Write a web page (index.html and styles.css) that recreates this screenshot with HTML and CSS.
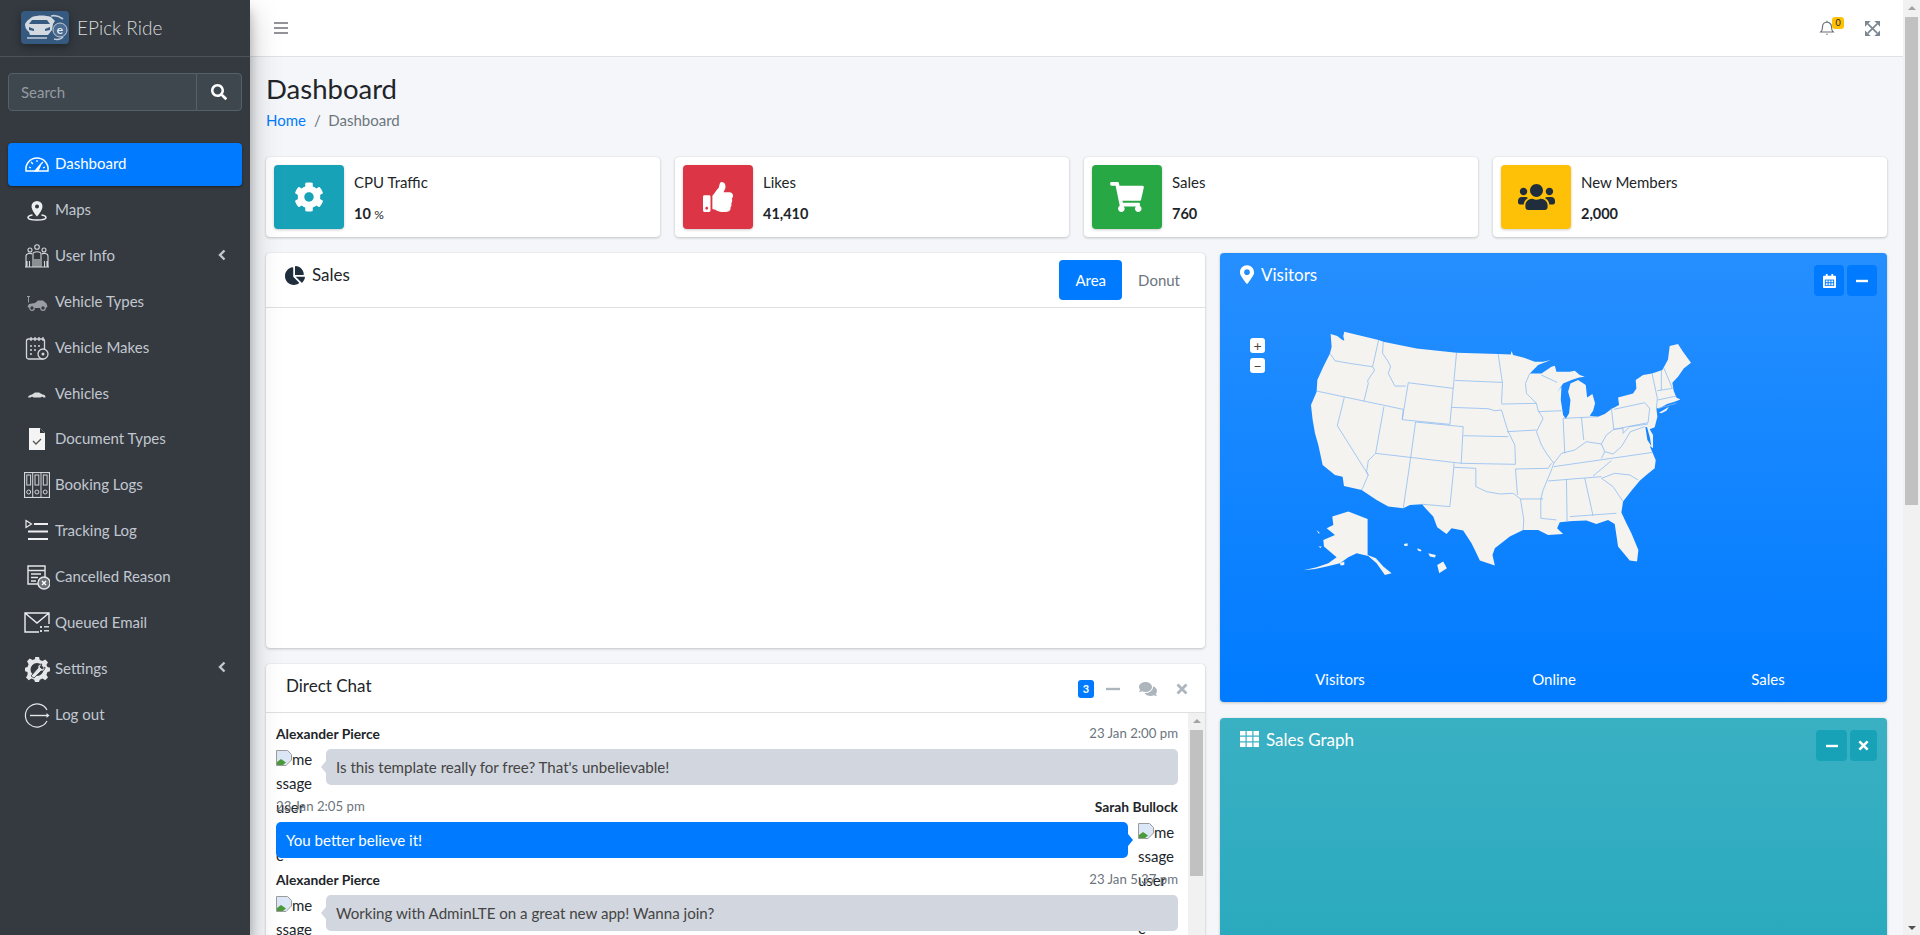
FILE: index.html
```html
<!DOCTYPE html>
<html lang="en">
<head>
<meta charset="utf-8">
<title>EPick Ride | Dashboard</title>
<link rel="stylesheet" href="styles.css">
</head>
<body>
<aside class="sidebar">
  <div class="brand">
    <svg class="logo" viewBox="0 0 48 33"><rect width="48" height="33" rx="4" fill="#35597f"/><path d="M4 13l2-3 5-4c6-2 13-2 19 0l4 4-2 3-1 6-4 5H9l-1-3c-3-2-4-5-4-8z" fill="#d3d9e1"/><path d="M11 9h15l3 4H8z" fill="#35597f"/><path d="M8 16l5 2v2l-5-1zM29 16l-5 2v2l5-1z" fill="#35597f"/><path d="M6 27h20M30 5c4-1 8 0 12 3M33 28c3 1 7 0 9-2" fill="none" stroke="#c3ccd8" stroke-width="1.6"/><circle cx="39" cy="19" r="7" fill="#4a6c90" stroke="#c3ccd8" stroke-width="1"/><text x="39" y="23" class="logo-e">e</text></svg>
    <span class="brand-text">EPick Ride</span>
  </div>
  <form class="search">
    <span class="search-input">Search</span>
    <span class="search-btn"><svg viewBox="0 0 512 512" class="i16"><path fill="#fff" d="M505 442.7L405.3 343c-4.5-4.5-10.6-7-17-7H372c27.6-35.3 44-79.7 44-128C416 93.1 322.9 0 208 0S0 93.1 0 208s93.1 208 208 208c48.3 0 92.7-16.4 128-44v16.3c0 6.4 2.5 12.5 7 17l99.7 99.7c9.4 9.4 24.6 9.4 33.9 0l28.3-28.3c9.4-9.4 9.4-24.6.1-34zM208 336c-70.7 0-128-57.2-128-128 0-70.7 57.2-128 128-128 70.7 0 128 57.2 128 128 0 70.7-57.2 128-128 128z"/></svg></span>
  </form>
  <ul class="nav">
    <li class="nav-item active"><svg class="nav-icon" viewBox="0 0 26 26"><path d="M2 20c-1-8 5-13 11-13s12 5 11 13H2z" fill="none" stroke="#fff" stroke-width="1.5"/><path d="M11 20l6-7-3 7zM5 16l2 1M7 11l2 2M13 9v2M19 11l-2 2M21 16l-2 1" stroke="#fff" stroke-width="1.2" fill="#fff"/></svg><span>Dashboard</span></li>
    <li class="nav-item"><svg class="nav-icon" viewBox="0 0 26 26"><path fill="#eceeef" d="M13 4a5.500 5.500 0 0 0-5.500 5.500C7.500 13.500 13 19.500 13 19.500s5.500-6 5.500-10A5.500 5.500 0 0 0 13 4z"/><circle cx="13" cy="9.500" r="2" fill="#343a40"/><path d="M8.500 18c-3 .5-4.500 1.500-4.500 2.500 0 1.500 4 2.500 9 2.500s9-1 9-2.500c0-1-1.500-2-4.500-2.500" fill="none" stroke="#eceeef" stroke-width="1.500"/></svg><span>Maps</span></li>
    <li class="nav-item"><svg class="nav-icon" viewBox="0 0 26 26"><g fill="none" stroke="#d4d7da" stroke-width="1.100"><circle cx="13" cy="4" r="2.300"/><circle cx="6" cy="7" r="2"/><circle cx="20" cy="7" r="2"/><path d="M9 24V11c0-3 8-3 8 0v13M2 24V13c0-3 5-3 6-2M24 24V13c0-3-5-3-6-2M3 24v-6M5.500 24v-6M11 24v-8M13 24v-8M15 24v-8M20.500 24v-6M23 24v-6M1 24h24"/></g></svg><span>User Info</span><svg class="chev" viewBox="0 0 10 12"><path d="M7.500 1.500L3 6l4.500 4.500" fill="none" stroke="#c2c7d0" stroke-width="2.400"/></svg></li>
    <li class="nav-item"><svg class="nav-icon" viewBox="0 0 26 26"><g fill="#9a9ea3"><path d="M4 7.500h1v6H4zM3 7h3v1H3z"/><path d="M5 15l6-1 3-2.500h5l3.500 3 1 3-1.500 1.500H5l-1.500-1.500z"/></g><circle cx="8" cy="19" r="2.300" fill="#343a40" stroke="#9a9ea3" stroke-width="1.200"/><circle cx="19" cy="19" r="2.300" fill="#343a40" stroke="#9a9ea3" stroke-width="1.200"/></svg><span>Vehicle Types</span></li>
    <li class="nav-item"><svg class="nav-icon" viewBox="0 0 26 26"><g fill="none" stroke="#d4d7da" stroke-width="1.300"><rect x="2.500" y="4" width="18" height="20" rx="2"/><path d="M7 2v4M11 2v4M15 2v4M19 2v4"/></g><path d="M6 10h2v2H6zM10 10h2v2h-2zM14 10h2v2h-2zM6 14h2v2H6zM10 14h2v2h-2zM6 18h2v2H6z" fill="#a9adb1"/><circle cx="19" cy="19" r="5" fill="#343a40" stroke="#d4d7da" stroke-width="1.300"/><circle cx="19" cy="19" r="1.500" fill="#d4d7da"/></svg><span>Vehicle Makes</span></li>
    <li class="nav-item"><svg class="nav-icon" viewBox="0 0 26 26"><path d="M4 16.500c0-1.500 1.500-2.500 4-3l3-2h4l3.500 2c2 .3 3 1 3 3z" fill="#d9dbdd"/><circle cx="8" cy="17" r="1.300" fill="#343a40"/><circle cx="18" cy="17" r="1.300" fill="#343a40"/></svg><span>Vehicles</span></li>
    <li class="nav-item"><svg class="nav-icon" viewBox="0 0 26 26"><path d="M5 2h11l5 5v17H5z" fill="#f4f4f4"/><path d="M16 2v5h5z" fill="#343a40"/><path d="M9 15l3 3 5-5" fill="none" stroke="#555" stroke-width="1.300"/></svg><span>Document Types</span></li>
    <li class="nav-item"><svg class="nav-icon" viewBox="0 0 26 26"><g fill="none" stroke="#d4d7da" stroke-width="1"><rect x=".5" y=".5" width="25" height="25" stroke-width="1.200"/><path d="M8.700 1v24M17 1v24"/><rect x="2.800" y="3" width="3.800" height="10"/><rect x="11" y="3" width="3.800" height="10"/><rect x="19.300" y="3" width="3.800" height="10"/><circle cx="4.700" cy="20" r="2"/><circle cx="12.900" cy="20" r="2"/><circle cx="21.200" cy="20" r="2"/></g></svg><span>Booking Logs</span></li>
    <li class="nav-item"><svg class="nav-icon" viewBox="0 0 26 26"><path d="M10 6h14M4 13.500h20M4 21h20" stroke="#eceeef" stroke-width="1.800"/><path d="M2 2.500l5.500 3.500L2 9.500z" fill="none" stroke="#eceeef" stroke-width="1.200"/></svg><span>Tracking Log</span></li>
    <li class="nav-item"><svg class="nav-icon" viewBox="0 0 26 26"><g fill="none" stroke="#e4e6e8" stroke-width="1.400"><path d="M15 20H4V2h17v11"/><path d="M4 6.500h17M7 10h10M7 13.500h7M7 17h5"/></g><circle cx="20" cy="19" r="6" fill="#6b7177" stroke="#e4e6e8" stroke-width="1.400"/><path d="M18 17l4 4M22 17l-4 4" stroke="#fff" stroke-width="1.400"/></svg><span>Cancelled Reason</span></li>
    <li class="nav-item"><svg class="nav-icon" viewBox="0 0 26 26"><g fill="none" stroke="#eceeef" stroke-width="1.400"><path d="M15 22H1V3h24v11M1 3l12 10L25 3"/></g><path d="M16 16h2v2h-2zM20 16h5v1.500h-5zM16 20h2v2h-2zM20 20h5v1.500h-5z" fill="#d4d7da"/></svg><span>Queued Email</span></li>
    <li class="nav-item"><svg class="nav-icon" viewBox="0 0 26 26"><path fill="#e4e6e8" fill-rule="evenodd" d="M11 1h4l.8 3 2.700 1.100 2.700-1.600 2.800 2.800-1.600 2.700L23.500 11l2.500.8v3.400l-2.500.8-1.100 2.700 1.600 2.700-2.800 2.800-2.700-1.600-2.700 1.100-.8 2.200h-4l-.8-2.200-2.700-1.100-2.700 1.600-2.800-2.800 1.600-2.700L3.500 16 1 15.200v-3.400l2.500-.8 1.100-2.700L3 5.300l2.800-2.800 2.700 1.600L11.200 3zM13 7a6.500 6.500 0 1 0 0 13 6.500 6.500 0 0 0 0-13z"/><path d="M7 20l7-8c-.5-2 1-4 4-4l-2 3 2 2 3-2c0 3-2 4.500-4 4l-7 7z" fill="#e4e6e8" stroke="#343a40" stroke-width=".8"/></svg><span>Settings</span><svg class="chev" viewBox="0 0 10 12"><path d="M7.500 1.500L3 6l4.500 4.500" fill="none" stroke="#c2c7d0" stroke-width="2.400"/></svg></li>
    <li class="nav-item"><svg class="nav-icon" viewBox="0 0 26 26"><path d="M23 8a11.500 11.500 0 1 0 0 11" fill="none" stroke="#e4e6e8" stroke-width="1.200"/><path d="M6 13.500h17" stroke="#e4e6e8" stroke-width="1.400"/><path d="M22.500 11l3 2.500-3 2.500z" fill="#e4e6e8"/></svg><span>Log out</span></li>
  </ul>
</aside>

<div class="page">
  <header class="topbar">
    <svg class="burger" viewBox="0 0 14 12"><path d="M0 1h14M0 6h14M0 11h14" stroke="#6f7276" stroke-width="1.600"/></svg>
    <div class="top-tools">
      <span class="bell"><svg class="i16" viewBox="0 0 16 18"><path d="M1 13.500c1.500-1.500 2-3 2-6a5 5 0 0 1 10 0c0 3 .5 4.500 2 6z" fill="none" stroke="#6a6f76" stroke-width="1.300"/><path d="M6.500 15.500h3L8 17z" fill="#6a6f76"/><path d="M8 .8v1.400" stroke="#6a6f76" stroke-width="1.300"/></svg><b class="bell-badge">0</b></span>
      <svg class="expand" viewBox="0 0 16 16"><path d="M3 3l10 10M13 3L3 13" stroke="#7b8792" stroke-width="1.800"/><path d="M0 0h6L0 6zM16 0h-6l6 6zM0 16h6l-6-6zM16 16h-6l6-6z" fill="#7b8792"/></svg>
    </div>
  </header>

  <main class="main">
    <h1 class="title">Dashboard</h1>
    <div class="crumbs"><a class="crumb-link">Home</a><span class="crumb-sep">/</span><span>Dashboard</span></div>

    <section class="infos">
      <div class="info"><span class="info-icon teal"><svg class="i30" viewBox="0 0 512 512"><path fill="#fff" d="M487.400 315.700l-42.600-24.600c4.300-23.200 4.300-47 0-70.200l42.600-24.600c4.900-2.800 7.100-8.600 5.500-14-11.100-35.600-30-67.800-54.700-94.600-3.800-4.100-10-5.100-14.800-2.300L380.800 110c-17.900-15.400-38.500-27.300-60.800-35.100V25.800c0-5.600-3.900-10.500-9.400-11.700-36.700-8.200-74.300-7.800-109.200 0-5.500 1.200-9.400 6.100-9.400 11.700V75c-22.200 7.900-42.800 19.800-60.800 35.100L88.700 85.500c-4.900-2.800-11-1.900-14.800 2.300-24.700 26.700-43.600 58.900-54.700 94.600-1.700 5.400.6 11.200 5.500 14L67.300 221c-4.300 23.200-4.300 47 0 70.200l-42.600 24.600c-4.900 2.800-7.100 8.600-5.500 14 11.100 35.600 30 67.800 54.700 94.600 3.800 4.100 10 5.100 14.800 2.300l42.600-24.600c17.900 15.400 38.500 27.300 60.800 35.100v49.200c0 5.600 3.900 10.500 9.400 11.700 36.700 8.200 74.300 7.800 109.200 0 5.500-1.200 9.400-6.100 9.400-11.700v-49.200c22.200-7.900 42.800-19.800 60.800-35.100l42.600 24.600c4.900 2.800 11 1.900 14.800-2.300 24.700-26.700 43.600-58.900 54.700-94.600 1.500-5.500-.7-11.300-5.600-14.100zM256 336c-44.100 0-80-35.900-80-80s35.900-80 80-80 80 35.900 80 80-35.900 80-80 80z"/></svg></span><div class="info-text"><span>CPU Traffic</span><span class="info-num">10 <small>%</small></span></div></div>
      <div class="info"><span class="info-icon red"><svg class="i30" viewBox="0 0 512 512"><path fill="#fff" d="M104 224H24c-13.255 0-24 10.745-24 24v240c0 13.255 10.745 24 24 24h80c13.255 0 24-10.745 24-24V248c0-13.255-10.745-24-24-24zM64 472c-13.255 0-24-10.745-24-24s10.745-24 24-24 24 10.745 24 24-10.745 24-24 24zM384 81.452c0 42.416-25.970 66.208-33.277 94.548h101.723c33.397 0 59.397 27.746 59.553 58.098.084 17.938-7.546 37.249-19.439 49.197l-.11.11c9.836 23.337 8.237 56.037-9.308 79.469 8.681 25.895-.069 57.704-16.382 74.757 4.298 17.598 2.244 32.575-6.148 44.632C440.202 511.587 389.616 512 346.839 512l-2.845-.001c-48.287-.017-87.806-17.598-119.560-31.725-15.957-7.099-36.821-15.887-52.651-16.178-6.540-.12-11.783-5.457-11.783-11.998v-213.770c0-3.200 1.282-6.271 3.558-8.521 39.614-39.144 56.648-80.587 89.117-113.111 14.804-14.832 20.188-37.236 25.393-58.902C282.515 39.293 291.817 0 312 0c24 0 72 8 72 81.452z"/></svg></span><div class="info-text"><span>Likes</span><span class="info-num">41,410</span></div></div>
      <div class="info"><span class="info-icon green"><svg class="i34" viewBox="0 0 576 512"><path fill="#fff" d="M528.120 301.319l47.273-208C578.806 78.301 567.391 64 551.990 64H159.208l-9.166-44.810C147.758 8.021 137.930 0 126.529 0H24C10.745 0 0 10.745 0 24v16c0 13.255 10.745 24 24 24h69.883l70.248 343.435C147.325 417.100 136 435.222 136 456c0 30.928 25.072 56 56 56s56-25.072 56-56c0-15.674-6.447-29.835-16.824-40h209.647C430.447 426.165 424 440.326 424 456c0 30.928 25.072 56 56 56s56-25.072 56-56c0-22.172-12.888-41.332-31.579-50.405l5.517-24.276c3.413-15.018-8.002-29.319-23.403-29.319H218.117l-6.545-32h293.145c11.206 0 20.920-7.754 23.403-18.681z"/></svg></span><div class="info-text"><span>Sales</span><span class="info-num">760</span></div></div>
      <div class="info"><span class="info-icon yellow"><svg class="i38" viewBox="0 0 640 512"><path fill="#1f2d3d" d="M96 224c35.300 0 64-28.700 64-64s-28.700-64-64-64-64 28.700-64 64 28.700 64 64 64zm448 0c35.300 0 64-28.700 64-64s-28.700-64-64-64-64 28.700-64 64 28.700 64 64 64zm32 32h-64c-17.600 0-33.500 7.100-45.100 18.600 40.300 22.100 68.900 62 75.100 109.400h66c17.700 0 32-14.300 32-32v-32c0-35.300-28.700-64-64-64zm-256 0c61.900 0 112-50.100 112-112S381.900 32 320 32 208 82.100 208 144s50.100 112 112 112zm76.800 32h-8.300c-20.800 10-43.900 16-68.500 16s-47.600-6-68.500-16h-8.300C179.600 288 128 339.600 128 403.200V432c0 26.500 21.500 48 48 48h288c26.500 0 48-21.500 48-48v-28.800c0-63.600-51.600-115.200-115.200-115.200zm-223.700-13.400C161.500 263.100 145.600 256 128 256H64c-35.300 0-64 28.700-64 64v32c0 17.700 14.300 32 32 32h65.900c6.300-47.400 34.900-87.300 75.200-109.400z"/></svg></span><div class="info-text"><span>New Members</span><span class="info-num">2,000</span></div></div>
    </section>

    <section class="columns">
      <div class="col">
        <article class="card sales-card">
          <div class="card-head">
            <svg class="head-icon" viewBox="0 0 544 512"><path fill="#1f2d3d" d="M527.790 288H290.500l158.030 158.030c6.040 6.040 15.980 6.530 22.190.68 38.700-36.460 65.320-85.610 73.130-140.860 1.340-9.460-6.510-17.850-16.060-17.850zm-15.830-64.800C503.720 103.740 408.260 8.280 288.800.04 279.680-.59 272 7.100 272 16.240V240h223.770c9.140 0 16.820-7.680 16.190-16.800zM224 288V50.710c0-9.550-8.390-17.400-17.840-16.060C86.990 51.490-4.100 155.600.14 280.370 4.500 408.510 114.830 513.590 243.030 511.980c50.400-.63 96.970-16.870 135.260-44.030 7.900-5.600 8.420-17.230 1.570-24.080L224 288z"/></svg>
            <h3 class="card-title">Sales</h3>
            <div class="tabs"><span class="tab tab-on">Area</span><span class="tab">Donut</span></div>
          </div>
        </article>

        <article class="card chat-card">
          <div class="card-head chat-head">
            <h3 class="card-title">Direct Chat</h3>
            <div class="chat-tools">
              <b class="chat-badge">3</b>
              <svg class="tool t-minus" viewBox="0 0 14 14"><path d="M0 7h14" stroke="#adb5bd" stroke-width="2.400"/></svg>
              <svg class="tool t-comments" viewBox="0 0 576 512"><path fill="#adb5bd" d="M416 192c0-88.400-93.100-160-208-160S0 103.600 0 192c0 34.300 14.100 65.900 38 92-13.400 30.200-35.500 54.200-35.800 54.500-2.200 2.300-2.800 5.700-1.500 8.700S4.800 352 8 352c36.600 0 66.900-12.300 88.700-25 32.200 15.700 70.300 25 111.300 25 114.900 0 208-71.600 208-160zm122 220c23.900-26 38-57.700 38-92 0-66.900-53.500-124.200-129.300-148.100.9 6.600 1.300 13.300 1.300 20.100 0 105.900-107.700 192-240 192-10.800 0-21.300-.8-31.700-1.900C207.800 439.600 281.800 480 368 480c41 0 79.100-9.200 111.300-25 21.800 12.700 52.100 25 88.700 25 3.200 0 6.100-1.900 7.300-4.800 1.300-2.900.7-6.300-1.500-8.700-.3-.3-22.400-24.200-35.800-54.500z"/></svg>
              <svg class="tool t-times" viewBox="0 0 12 12"><path d="M1.500 1.500l9 9M10.500 1.500l-9 9" stroke="#adb5bd" stroke-width="2.800"/></svg>
            </div>
          </div>
          <div class="chat-body">
            <div class="messages">
              <div class="msg">
                <div class="msg-info"><span class="msg-name">Alexander Pierce</span><span class="msg-time">23 Jan 2:00 pm</span></div>
                <span class="msg-img"><svg class="broken" viewBox="0 0 16 16"><path d="M.5.500h11l4 4v5.500L10 15.500H.5z" fill="#dbe6f6" stroke="#9c9c9c"/><path d="M1 15v-3l4-3 5 3.500-3 2.500z" fill="#4b9a3c"/></svg>me<br>ssage<br>user<br>imag<br>e</span>
                <div class="bubble">Is this template really for free? That's unbelievable!</div>
              </div>
              <div class="msg msg-right">
                <div class="msg-info"><span class="msg-name">Sarah Bullock</span><span class="msg-time">23 Jan 2:05 pm</span></div>
                <span class="msg-img"><svg class="broken" viewBox="0 0 16 16"><path d="M.5.500h11l4 4v5.500L10 15.500H.5z" fill="#dbe6f6" stroke="#9c9c9c"/><path d="M1 15v-3l4-3 5 3.500-3 2.500z" fill="#4b9a3c"/></svg>me<br>ssage<br>user<br>imag<br>e</span>
                <div class="bubble">You better believe it!</div>
              </div>
              <div class="msg">
                <div class="msg-info"><span class="msg-name">Alexander Pierce</span><span class="msg-time">23 Jan 5:37 pm</span></div>
                <span class="msg-img"><svg class="broken" viewBox="0 0 16 16"><path d="M.5.500h11l4 4v5.500L10 15.500H.5z" fill="#dbe6f6" stroke="#9c9c9c"/><path d="M1 15v-3l4-3 5 3.500-3 2.500z" fill="#4b9a3c"/></svg>me<br>ssage<br>user<br>imag<br>e</span>
                <div class="bubble">Working with AdminLTE on a great new app! Wanna join?</div>
              </div>
            </div>
            <div class="chat-scroll"><i class="arrow-up"></i><i class="chat-thumb"></i></div>
          </div>
        </article>
      </div>

      <div class="col">
        <article class="card grad-blue visitors">
          <div class="grad-head">
            <svg class="head-pin" viewBox="0 0 384 512"><path fill="#fff" d="M172.268 501.670C26.970 291.031 0 269.413 0 192 0 85.961 85.961 0 192 0s192 85.961 192 192c0 77.413-26.970 99.031-172.268 309.670-9.535 13.774-29.930 13.773-39.464 0zM192 272c44.183 0 80-35.817 80-80s-35.817-80-80-80-80 35.817-80 80 35.817 80 80 80z"/></svg>
            <h3 class="card-title">Visitors</h3>
            <div class="grad-tools">
              <span class="gbtn blue"><svg class="g-cal" viewBox="0 0 14 16"><path d="M1 3h12a1 1 0 0 1 1 1v11a1 1 0 0 1-1 1H1a1 1 0 0 1-1-1V4a1 1 0 0 1 1-1zM3 1h2v3H3zM9 1h2v3H9z" fill="#fff"/><path d="M2 7h10v7H2z" fill="#007bff"/><path d="M3 8h2v2H3zM6 8h2v2H6zM9 8h2v2H9zM3 11h2v2H3zM6 11h2v2H6zM9 11h2v2H9z" fill="#fff"/></svg></span>
              <span class="gbtn blue"><svg class="g-min" viewBox="0 0 12 4"><path d="M0 2h12" stroke="#fff" stroke-width="2.400"/></svg></span>
            </div>
          </div>
          <div class="map-wrap">
            <div class="zoom-box"><span class="zbtn">+</span><span class="zbtn">−</span></div>
            <svg class="usmap" viewBox="0 0 1180 780">
              <path class="land" d="M92 42L112 48L125 58L133 62L130 48L133 35L236 60L250 65L350 85L470 98L595 102L633 103L635 93L640 105L670 112L705 125L730 125L753 120L715 135L690 160L725 160L755 140L765 137L770 155L810 155L825 152L840 165L855 170L838 172L815 180L790 190L772 217L785 200L783 240L790 285L798 296L808 280L812 240L805 215L812 190L835 180L858 195L862 232L878 222L886 250L880 272L870 287L895 290L915 282L935 267L958 255L955 232L1000 220L1010 205L1008 180L1030 165L1057 160L1088 150L1105 118L1110 78L1135 72L1150 95L1174 128L1152 145L1135 170L1118 188L1122 212L1130 232L1142 238L1125 245L1102 252L1080 265L1070 265L1073 290L1065 322L1050 328L1060 345L1060 385L1050 378L1068 420L1065 445L1040 465L1020 482L995 512L970 545L965 578L980 610L995 640L1016 690L1012 725L990 722L955 680L945 612L925 600L890 612L860 602L820 603L802 605L780 607L772 625L790 642L745 645L715 630L670 630L630 650L585 685L578 705L585 737L540 722L525 690L515 670L490 632L455 625L440 642L412 622L400 590L372 560L367 553L330 555L310 565L265 560L230 540L185 510L132 498L128 470L105 465L68 435L55 375L45 340L38 300L33 255L50 215L52 180L70 140L90 100L95 80z"/>
              <path class="land" d="M1078 278L1108 260L1100 272L1085 280zM97 590L145 575L203 597L203 705L228 715L250 740L275 760L255 765L230 730L205 708L170 700L145 712L120 730L80 740L45 747L10 751L50 742L85 730L110 712L72 680L70 660L105 645L80 625L100 615zM412 735L430 725L441 745L418 760zM385 700L408 705L405 713L390 710zM352 685L365 690L362 695L354 692zM312 672L323 670L323 678L314 678zM50 630L60 640L55 640zM55 680L65 680L62 684zM120 730L133 725L133 735L122 737z"/>
              <path class="bay" d="M1037 320L1043 360L1055 378L1050 350L1042 322z"/>
              <path class="lines" d="M90 100L105 122L150 130L218 140M236 60L218 140L224 150L203 182L205 190L192 243M50 213L310 268M133 232L112 317L205 465M252 260L227 400L205 422L200 455L205 465L190 500L185 510M250 65L248 100L265 125L272 140L265 160L285 198L318 198M325 188L460 205L450 313L307 299L325 188M310 268L307 299M347 306L332 415L310 565M227 400L484 430M347 306L490 320L484 430M470 98L460 205M465 181L608 187M455 262L565 266L585 272L605 270M490 347L625 350M484 430L647 433M462 430L462 442L528 445L528 500L560 515L600 522L640 520L662 537M462 442L450 560L367 553M595 102L608 190L605 250M605 252L710 250M605 270L625 335L645 375L647 433M622 335L710 330M647 447L745 445L755 430M690 160L677 190L680 220L710 250L715 272M715 275L785 272M725 165L772 187M715 272L730 295L710 335L725 375L740 400L762 430L755 450L730 510L723 537L723 595L770 600M790 295L795 400M790 295L895 290M845 292L852 360M762 430L785 400L825 390L860 365L905 372L920 345L942 328M935 265L942 328M942 268L1035 248L1050 265L1045 308L942 328M762 440L1060 397M745 483L905 470M647 447L653 525M662 537L730 537M662 537L672 600L670 630M800 478L802 605M855 475L880 588M810 590L950 580M905 475L945 460L990 465L1015 480M905 475L940 500L970 545M880 468L935 422M905 372L915 395L940 402L965 380L992 335L1035 320M905 415L915 395M942 328L970 325L970 340L990 320L1045 312M1057 160L1073 235L1070 265M1085 150L1085 210M1093 145L1118 205M1073 240L1130 228M1075 265L1130 250M1073 212L1118 205"/>
            </svg>
          </div>
          <div class="stats"><span>Visitors</span><span>Online</span><span>Sales</span></div>
        </article>

        <article class="card grad-teal graph">
          <div class="grad-head">
            <svg class="head-grid" viewBox="0 0 19 16"><path d="M0 0h5.500v4.500H0zM6.700 0h5.600v4.500H6.700zM13.500 0H19v4.500h-5.500zM0 5.700h5.500v4.600H0zM6.700 5.700h5.600v4.600H6.700zM13.500 5.700H19v4.600h-5.500zM0 11.500h5.500V16H0zM6.700 11.500h5.600V16H6.700zM13.500 11.500H19V16h-5.500z" fill="#fff"/></svg>
            <h3 class="card-title">Sales Graph</h3>
            <div class="grad-tools graph-tools">
              <span class="gbtn teal-btn wide"><svg class="g-min" viewBox="0 0 12 4"><path d="M0 2h12" stroke="#fff" stroke-width="2.400"/></svg></span>
              <span class="gbtn teal-btn narrow"><svg class="g-x" viewBox="0 0 12 12"><path d="M1.500 1.500l9 9M10.500 1.500l-9 9" stroke="#fff" stroke-width="2.800"/></svg></span>
            </div>
          </div>
        </article>
      </div>
    </section>
  </main>
</div>

<div class="scrollbar"><i class="arrow-up"></i><i class="page-thumb"></i><i class="arrow-down"></i></div>
</body>
</html>
```
FILE: styles.css
```css
* { box-sizing: border-box; }
html, body { margin: 0; height: 100%; }
body {
  display: flex;
  height: 935px;
  overflow: hidden;
  background: #f4f6f9;
  color: #212529;
  font-family: "Lato", "Liberation Sans", sans-serif;
  font-size: 15px;
  line-height: 24px;
}
svg { display: block; flex: none; }
h1, h3 { margin: 0; font-weight: 400; }
.i16 { width: 16px; height: 16px; }
.i30 { width: 30px; height: 30px; }
.i34 { width: 34px; height: 30px; }
.i38 { width: 37px; height: 30px; }

/* sidebar */
.sidebar {
  width: 250px;
  flex: none;
  background: #343a40;
  color: #c2c7d0;
  position: relative;
  z-index: 2;
  box-shadow: 0 14px 28px rgba(0,0,0,.25), 0 10px 10px rgba(0,0,0,.22);
}
.brand {
  height: 57px;
  border-bottom: 1px solid #4b545c;
  display: flex;
  align-items: center;
  padding-left: 21px;
  gap: 8px;
}
.logo { width: 48px; height: 33px; margin-top: -1px; filter: drop-shadow(0 3px 4px rgba(0,0,0,.35)); }
.logo-e { font: 700 12px "Lato", sans-serif; fill: #e6ebf1; text-anchor: middle; }
.brand-text { font-size: 19px; font-weight: 300; color: rgba(255,255,255,.82); }
.search {
  margin: 16px 8px 0;
  height: 38px;
  display: flex;
  background: #3f474e;
  border: 1px solid #56606a;
  border-radius: 4px;
}
.search-input { flex: 1; padding: 6px 12px; color: #949ba2; border-right: 1px solid #56606a; }
.search-btn { width: 44px; display: flex; align-items: center; justify-content: center; }
.nav { list-style: none; margin: 32px 0 0; padding: 0 8px; }
.nav-item {
  height: 42.85px;
  margin-bottom: 3px;
  border-radius: 4px;
  padding-left: 16px;
  display: flex;
  align-items: center;
  position: relative;
}
.nav-item span { margin-top: -2px; }
.nav-item.active {
  background: #007bff;
  color: #fff;
  box-shadow: 0 1px 3px rgba(0,0,0,.2), 0 1px 2px rgba(0,0,0,.24);
}
.nav-icon { width: 26px; height: 26px; margin: 0 5px 0 0; }
.chev { width: 10px; height: 12px; position: absolute; right: 15px; top: 14px; }

/* page */
.page { width: 1653px; flex: none; display: flex; flex-direction: column; height: 935px; overflow: hidden; }
.topbar {
  height: 57px;
  flex: none;
  background: #fff;
  border-bottom: 1px solid #dee2e6;
  display: flex;
  align-items: center;
  justify-content: space-between;
  padding: 0 23px 0 24px;
}
.burger { width: 14px; height: 12px; }
.top-tools { display: flex; align-items: center; gap: 30px; }
.bell { position: relative; display: block; }
.bell-badge {
  position: absolute;
  top: -3px;
  left: 13px;
  width: 12px;
  height: 12px;
  border-radius: 3px;
  background: #ffc107;
  color: #212529;
  font-size: 9px;
  font-weight: 400;
  line-height: 12px;
  text-align: center;
}
.expand { width: 15px; height: 15px; }

.main { padding: 14px 16px 0; flex: 1; }
.title { font-size: 27.5px; line-height: 35px; }
.crumbs { margin-top: 2px; color: #6c757d; display: flex; }
.crumb-link { color: #007bff; }
.crumb-sep { padding: 0 7.500px 0 8px; color: #6c757d; }

.infos { display: grid; grid-template-columns: repeat(4, 394px); gap: 15px; margin-top: 25px; }
.info, .card {
  background: #fff;
  border-radius: 4px;
  box-shadow: 0 0 1px rgba(0,0,0,.125), 0 1px 3px rgba(0,0,0,.2);
}
.info { height: 80px; padding: 8px; display: flex; }
.info-icon {
  width: 70px;
  height: 64px;
  border-radius: 4px;
  display: flex;
  align-items: center;
  justify-content: center;
  box-shadow: 0 1px 3px rgba(0,0,0,.2);
}
.teal { background: #17a2b8; }
.red { background: #dc3545; }
.green { background: #28a745; }
.yellow { background: #ffc107; }
.info-text { padding: 5px 10px; display: flex; flex-direction: column; gap: 8px; }
.info-num { font-weight: 700; font-size: 14.5px; }
.info-num small { font-weight: 400; font-size: 12px; }

.columns { display: grid; grid-template-columns: 939px 667px; gap: 15px; margin-top: 16px; align-items: start; }
.col { display: flex; flex-direction: column; gap: 16px; }
.card-head {
  height: 55px;
  border-bottom: 1px solid #dfdfdf;
  display: flex;
  align-items: flex-start;
  padding: 10px 9px 0 19px;
}
.card-title { font-size: 17px; line-height: 24px; }
.sales-card { height: 395px; }
.head-icon { width: 20px; height: 19px; margin: 3px 7px 0 0; }
.tabs { margin-left: auto; display: flex; margin-top: -3px; }
.tab { height: 40px; padding: 8px 16px; color: #6c757d; border-radius: 4px; font-size: 15px; }
.tab-on { background: #007bff; color: #fff; margin-right: 0; }

.chat-card { height: 400px; }
.chat-head { height: 49px; padding: 10px 0 0 20px; }
.chat-tools { margin-left: auto; display: flex; align-items: center; height: 28px; padding-right: 17px; }
.chat-badge {
  width: 16px;
  height: 18px;
  border-radius: 3px;
  background: #007bff;
  color: #fff;
  font-size: 11px;
  line-height: 18px;
  text-align: center;
  margin-top: 2px;
}
.tool { margin-top: 2px; }
.t-minus { width: 14px; height: 14px; margin-left: 12px; }
.t-comments { width: 18px; height: 16px; margin-left: 19px; }
.t-times { width: 12px; height: 12px; margin-left: 19px; }
.chat-body { display: flex; height: 351px; }
.messages { flex: 1; padding: 10px; min-width: 0; }
.msg { margin-bottom: 11px; }
.msg::after { content: ""; display: block; clear: both; }
.msg-info { display: flex; justify-content: space-between; font-size: 13.8px; line-height: 21px; }
.msg-name { font-weight: 700; }
.msg-time { color: #6c757d; font-size: 13.2px; }
.msg-right .msg-info { flex-direction: row-reverse; }
.msg-img { float: left; width: 40px; height: 37px; margin-top: 3px; }
.msg-right .msg-img { float: right; }
.broken { width: 16px; height: 16px; display: inline-block; vertical-align: -1px; }
.bubble {
  position: relative;
  margin: 5px 0 0 50px;
  height: 36px;
  padding: 6px 10px;
  background: #d2d6de;
  color: #444;
  border-radius: 5px;
  font-size: 15.100px;
}
.bubble::after {
  content: "";
  position: absolute;
  top: 12px;
  left: -5px;
  border: solid transparent;
  border-width: 6px 5px 6px 0;
  border-right-color: #d2d6de;
}
.msg-right .bubble { margin: 5px 50px 0 0; background: #007bff; color: #fff; }
.msg-right .bubble::after {
  left: auto;
  right: -5px;
  border-width: 6px 0 6px 5px;
  border-left-color: #007bff;
  border-right-color: transparent;
}
.chat-scroll { width: 17px; background: #f1f1f1; position: relative; flex: none; }
.chat-thumb { position: absolute; left: 2px; right: 2px; top: 17px; height: 146px; background: #c1c1c1; }
.arrow-up {
  position: absolute;
  top: 6px;
  left: 4.5px;
  border: solid transparent;
  border-width: 0 4px 4px;
  border-bottom-color: #a3a3a3;
}
.arrow-down {
  position: absolute;
  bottom: 5px;
  left: 4.5px;
  border: solid transparent;
  border-width: 4px 4px 0;
  border-top-color: #505050;
}

.grad-blue { background: linear-gradient(180deg, #268fff, #007bff); color: #fff; }
.grad-teal { background: linear-gradient(180deg, #3ab0c3, #17a2b8); color: #fff; }
.visitors { height: 449px; display: flex; flex-direction: column; }
.graph { height: 500px; }
.grad-head { display: flex; align-items: flex-start; padding: 10px 10px 0 20px; height: 48px; }
.head-pin { width: 14px; height: 19px; margin: 2px 7px 0 0; }
.head-grid { width: 19px; height: 16px; margin: 3px 7px 0 0; }
.grad-tools { margin-left: auto; display: flex; gap: 3px; margin-top: 2px; }
.gbtn {
  width: 30px;
  height: 31px;
  border-radius: 4px;
  display: flex;
  align-items: center;
  justify-content: center;
}
.blue { background: #007bff; }
.teal-btn { background: #17a2b8; }
.wide { width: 31px; }
.narrow { width: 27px; }
.g-cal { width: 13px; height: 15px; }
.g-min { width: 12px; height: 4px; }
.g-x { width: 11px; height: 11px; }
.map-wrap { position: relative; flex: 1; padding: 19px 0 0 80px; }
.usmap { width: 393px; height: 260px; }
.land { fill: #f4f3f0; }
.bay { fill: #1585ff; }
.lines { fill: none; stroke: #86b8f0; stroke-width: 2.200; stroke-linejoin: round; }
.zoom-box { position: absolute; left: 30px; top: 37px; display: flex; flex-direction: column; gap: 5px; }
.zbtn {
  width: 15px;
  height: 15px;
  border-radius: 3px;
  background: #fff;
  color: #444;
  font-size: 14px;
  line-height: 15px;
  text-align: center;
}
.stats { display: grid; grid-template-columns: repeat(3, 214px); padding: 0 13px 11px; text-align: center; }
.scrollbar { width: 17px; flex: none; background: #f1f1f1; position: relative; height: 935px; }
.page-thumb { position: absolute; left: 2px; right: 2px; top: 17px; height: 488px; background: #c1c1c1; }
```
